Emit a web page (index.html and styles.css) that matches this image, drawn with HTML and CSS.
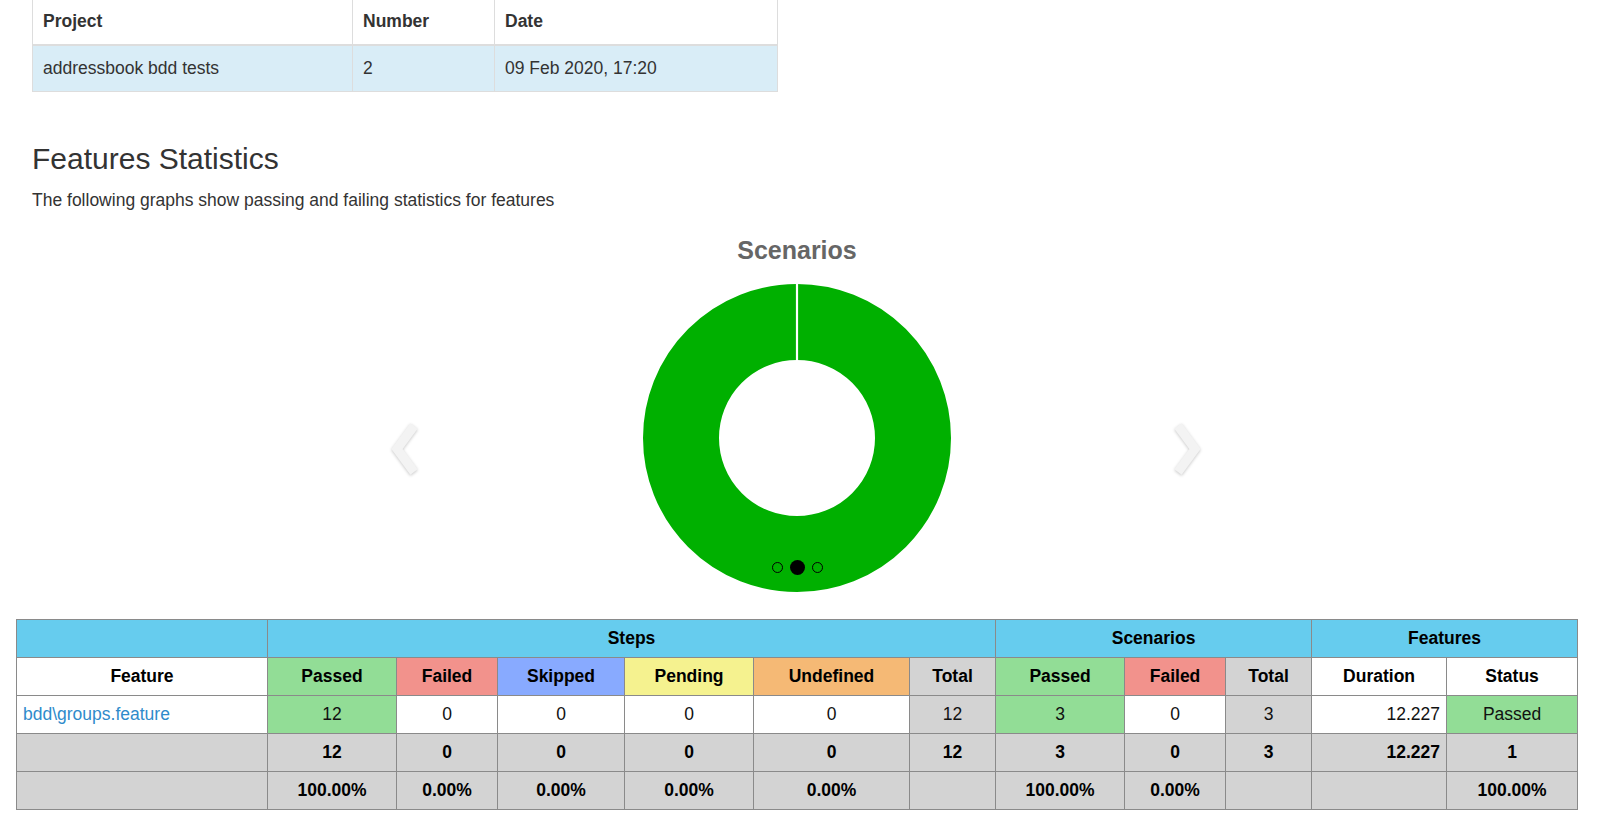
FILE: index.html
```html
<!DOCTYPE html>
<html lang="en">
<head>
<meta charset="utf-8">
<title>Features Statistics</title>
<link rel="stylesheet" href="styles.css">
</head>
<body>
<table class="info-table">
  <colgroup><col class="c-project"><col class="c-number"><col class="c-date"></colgroup>
  <thead>
    <tr><th>Project</th><th>Number</th><th>Date</th></tr>
  </thead>
  <tbody>
    <tr class="info"><td>addressbook bdd tests</td><td>2</td><td>09 Feb 2020, 17:20</td></tr>
  </tbody>
</table>

<h3 class="section-title">Features Statistics</h3>
<p class="section-desc">The following graphs show passing and failing statistics for features</p>

<div class="carousel">
  <div class="chart-title">Scenarios</div>
  <svg class="donut" width="320" height="320" viewBox="0 0 320 320">
    <circle cx="160" cy="160" r="116" fill="none" stroke="#00b000" stroke-width="76"/>
    <line x1="160" y1="4" x2="160" y2="84" stroke="#ffffff" stroke-width="2.2"/>
  </svg>
  <a class="control control-left" href="#">
    <svg width="36" height="56" viewBox="0 0 36 56"><polyline points="27,5 10,28 27,51" fill="none" stroke="#f3f3f3" stroke-width="9" stroke-linejoin="miter"/></svg>
  </a>
  <a class="control control-right" href="#">
    <svg width="36" height="56" viewBox="0 0 36 56"><polyline points="9,5 26,28 9,51" fill="none" stroke="#f3f3f3" stroke-width="9" stroke-linejoin="miter"/></svg>
  </a>
  <ol class="indicators">
    <li class="dot"></li>
    <li class="dot active"></li>
    <li class="dot"></li>
  </ol>
</div>

<table class="stats-table">
  <colgroup>
    <col class="w-feature"><col class="w-s1"><col class="w-s2"><col class="w-s3"><col class="w-s4"><col class="w-s5"><col class="w-s6">
    <col class="w-c1"><col class="w-c2"><col class="w-c3"><col class="w-f1"><col class="w-f2">
  </colgroup>
  <thead>
    <tr class="group-row">
      <th class="header"></th>
      <th class="header" colspan="6">Steps</th>
      <th class="header" colspan="3">Scenarios</th>
      <th class="header" colspan="2">Features</th>
    </tr>
    <tr>
      <th>Feature</th>
      <th class="passed">Passed</th>
      <th class="failed">Failed</th>
      <th class="skipped">Skipped</th>
      <th class="pending">Pending</th>
      <th class="undefined">Undefined</th>
      <th class="total">Total</th>
      <th class="passed">Passed</th>
      <th class="failed">Failed</th>
      <th class="total">Total</th>
      <th>Duration</th>
      <th>Status</th>
    </tr>
  </thead>
  <tbody>
    <tr>
      <td class="left"><a class="feature-link" href="#">bdd\groups.feature</a></td>
      <td class="passed">12</td>
      <td>0</td>
      <td>0</td>
      <td>0</td>
      <td>0</td>
      <td class="total">12</td>
      <td class="passed">3</td>
      <td>0</td>
      <td class="total">3</td>
      <td class="duration">12.227</td>
      <td class="passed">Passed</td>
    </tr>
  </tbody>
  <tfoot>
    <tr class="total-row">
      <td></td><td>12</td><td>0</td><td>0</td><td>0</td><td>0</td><td>12</td><td>3</td><td>0</td><td>3</td><td class="duration">12.227</td><td>1</td>
    </tr>
    <tr class="total-row">
      <td></td><td>100.00%</td><td>0.00%</td><td>0.00%</td><td>0.00%</td><td>0.00%</td><td></td><td>100.00%</td><td>0.00%</td><td></td><td></td><td>100.00%</td>
    </tr>
  </tfoot>
</table>
</body>
</html>
```
FILE: styles.css
```css
html, body {
  margin: 0;
  padding: 0;
  background: #ffffff;
}

body {
  font-family: "Liberation Sans", Arial, Helvetica, sans-serif;
  font-size: 17.5px;
  line-height: 25px;
  color: #333333;
  overflow: hidden;
}

/* ---------- top info table ---------- */
.info-table {
  margin: -2px 0 0 32px;
  width: 745px;
  border-collapse: collapse;
  table-layout: fixed;
}
.c-project { width: 320px; }
.c-number { width: 142px; }
.c-date { width: 283px; }

.info-table th,
.info-table td {
  border: 1px solid #dddddd;
  padding: 10px;
  text-align: left;
  line-height: 25px;
}
.info-table th {
  font-weight: bold;
  border-bottom: 2px solid #dddddd;
}
.info-table tr.info td {
  background: #d9edf7;
}

/* ---------- section heading ---------- */
.section-title {
  margin: 50px 0 13px 32px;
  font-size: 30px;
  line-height: 33px;
  font-weight: normal;
  color: #333333;
}
.section-desc {
  margin: 0 0 0 32px;
  line-height: 25px;
}

/* ---------- carousel ---------- */
.carousel {
  position: relative;
  height: 384px;
  padding: 22px 6px 0 0;
}
.chart-title {
  text-align: center;
  font-size: 25px;
  line-height: 30px;
  font-weight: bold;
  color: #666666;
}
.donut {
  display: block;
  margin: 12.5px auto 0;
}
.control {
  position: absolute;
  top: 208px;
  display: block;
  width: 36px;
  height: 56px;
  filter: drop-shadow(0 1px 1.5px rgba(0, 0, 0, 0.22));
}
.control svg { display: block; }
.control-left { left: 387px; }
.control-right { left: 1169px; }

.indicators {
  position: absolute;
  left: 0;
  right: 6px;
  top: 347px;
  height: 15px;
  margin: 0;
  padding: 0;
  list-style: none;
  display: flex;
  justify-content: center;
  align-items: center;
  gap: 7px;
}
.dot {
  width: 9px;
  height: 9px;
  border: 1px solid #000000;
  border-radius: 50%;
  background: transparent;
}
.dot.active {
  width: 15px;
  height: 15px;
  border: 0;
  background: #000000;
}

/* ---------- statistics table ---------- */
.stats-table {
  margin-left: 16px;
  width: 1562px;
  border-collapse: collapse;
  table-layout: fixed;
}
.w-feature { width: 251px; }
.w-s1 { width: 129px; }
.w-s2 { width: 101px; }
.w-s3 { width: 127px; }
.w-s4 { width: 129px; }
.w-s5 { width: 156px; }
.w-s6 { width: 86px; }
.w-c1 { width: 129px; }
.w-c2 { width: 101px; }
.w-c3 { width: 86px; }
.w-f1 { width: 135px; }
.w-f2 { width: 131px; }

.stats-table th,
.stats-table td {
  border: 1px solid #8a8a8a;
  height: 37px;
  padding: 0 4px;
  text-align: center;
  vertical-align: middle;
  line-height: 25px;
  color: #111111;
  background: #ffffff;
}
.stats-table th {
  font-weight: bold;
  color: #000000;
}
.stats-table th.header {
  background: #66ccee;
}
.stats-table .passed { background: #92dd96; }
.stats-table .failed { background: #f2928c; }
.stats-table .skipped { background: #88aaff; }
.stats-table .pending { background: #f5f28f; }
.stats-table .undefined { background: #f5b975; }
.stats-table .total { background: #d3d3d3; }

.stats-table td.left { text-align: left; padding-left: 6px; }
.stats-table td.duration { text-align: right; padding-right: 6px; }

.feature-link {
  color: #2f8bcb;
  text-decoration: none;
}

.stats-table tr.total-row td {
  background: #d3d3d3;
  font-weight: bold;
  color: #000000;
}
```
